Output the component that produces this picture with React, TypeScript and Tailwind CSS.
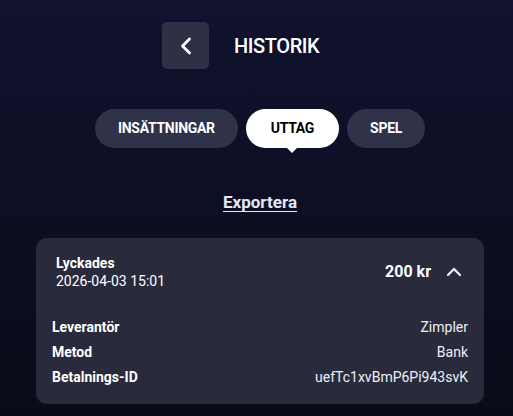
import React from 'react';
import { ChevronLeft, ChevronUp } from 'lucide-react';

const tabs = ['INSÄTTNINGAR', 'UTTAG', 'SPEL'];

const details = [
  { label: 'Leverantör', value: 'Zimpler' },
  { label: 'Metod', value: 'Bank' },
  { label: 'Betalnings-ID', value: 'uefTc1xvBmP6Pi943svK' },
];

export default function App() {
  const active = 'UTTAG';

  return (
    <div
      className="min-h-[416px] w-full bg-gradient-to-b from-[#10122f] to-[#0a0b18] pl-[36px] pr-[29px] pt-[22px] pb-[13px] text-white"
      style={{ fontFamily: 'Roboto, "Noto Sans", sans-serif' }}
    >
      {/* Header */}
      <div className="flex items-center gap-[25px] pl-[126px]">
        <button className="flex h-[47px] w-[47px] items-center justify-center rounded-[5px] bg-[#2e3046]">
          <ChevronLeft size={28} strokeWidth={2.4} className="text-white" />
        </button>
        <h1 className="text-[20px] font-medium tracking-[-0.4px]">HISTORIK</h1>
      </div>

      {/* Tabs */}
      <div className="mt-[40px] flex justify-center gap-2">
        {tabs.map((tab) => (
          <div
            key={tab}
            className={
              tab === active
                ? 'relative flex h-[39px] items-center rounded-full bg-white px-[25px] text-[14px] font-bold tracking-[-0.3px] text-black'
                : 'relative flex h-[39px] items-center rounded-full bg-[#30324a] px-[23px] text-[14px] font-bold tracking-[-0.3px] text-white'
            }
          >
            {tab}
            {tab === active && (
              <span className="absolute left-1/2 top-full -translate-x-1/2 border-x-[5px] border-t-[5px] border-x-transparent border-t-white" />
            )}
          </div>
        ))}
      </div>

      {/* Export */}
      <div className="mt-[44px] flex justify-center">
        <a className="text-[17px] font-bold leading-[20px] text-[#e2e8f5] underline underline-offset-[3px]">
          Exportera
        </a>
      </div>

      {/* Transaction card */}
      <div className="mt-[26px] rounded-[11px] bg-[#292b3d] pt-4 pb-[17px]">
        <div className="flex items-center justify-between pl-5 pr-[18px]">
          <div className="text-[14px] leading-[18px]">
            <div className="font-bold">Lyckades</div>
            <div>2026-04-03 15:01</div>
          </div>
          <div className="flex items-center gap-[11px]">
            <span className="text-[16px] font-bold">200 kr</span>
            <ChevronUp size={24} strokeWidth={2.2} className="text-white" />
          </div>
        </div>

        <div className="mt-[27px] flex flex-col gap-[5px] px-4 text-[14px] leading-[20px]">
          {details.map((row) => (
            <div key={row.label} className="flex items-center justify-between">
              <span className="font-bold">{row.label}</span>
              <span className="text-[#eef0f6]">{row.value}</span>
            </div>
          ))}
        </div>
      </div>
    </div>
  );
}
